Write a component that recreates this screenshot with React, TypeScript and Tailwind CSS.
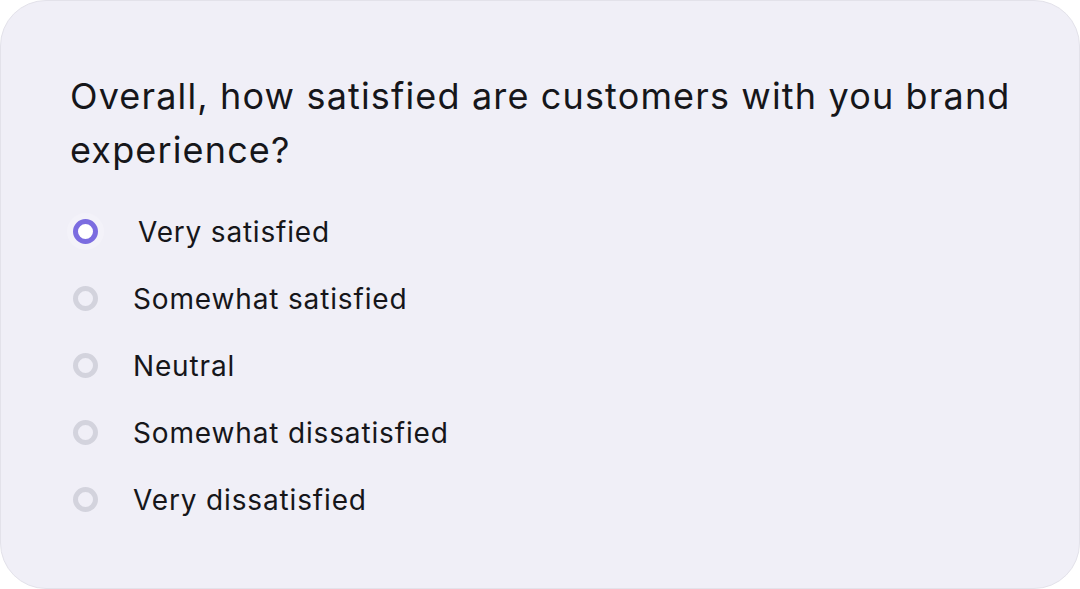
const options = [
  "Very satisfied",
  "Somewhat satisfied",
  "Neutral",
  "Somewhat dissatisfied",
  "Very dissatisfied",
];

function Radio({ checked }: { checked: boolean }) {
  if (checked) {
    return (
      <span className="ml-[3px] h-[25px] w-[25px] shrink-0 rounded-full border-[5px] border-[#7b6ce0] bg-white shadow-[0_0_0_6px_#f3f2f9]" />
    );
  }
  return <span className="ml-[3px] h-[25px] w-[25px] shrink-0 rounded-full border-[5px] border-[#d3d3dd]" />;
}

export default function App() {
  const selected = 0;

  return (
    <div className="h-[589px] w-[1080px] bg-white font-['Inter',sans-serif] text-[#16161a]">
      <div className="h-full w-full rounded-[46px] border border-[#e3e2ea] bg-[#f0eff7] pl-[69px] pt-[68px]">
        <h1 className="max-w-[980px] text-[36px] font-normal leading-[54px] tracking-[1.15px]">
          Overall, how satisfied are customers with you brand experience?
        </h1>
        <div className="mt-[21px] flex flex-col">
          {options.map((label, i) => (
            <label key={label} className="flex h-[67px] items-center gap-[35px]">
              <Radio checked={i === selected} />
              <span className={i === selected ? "pl-[5px] text-[28px] tracking-[0.8px]" : "text-[28px] tracking-[0.85px]"}>
                {label}
              </span>
            </label>
          ))}
        </div>
      </div>
    </div>
  );
}
